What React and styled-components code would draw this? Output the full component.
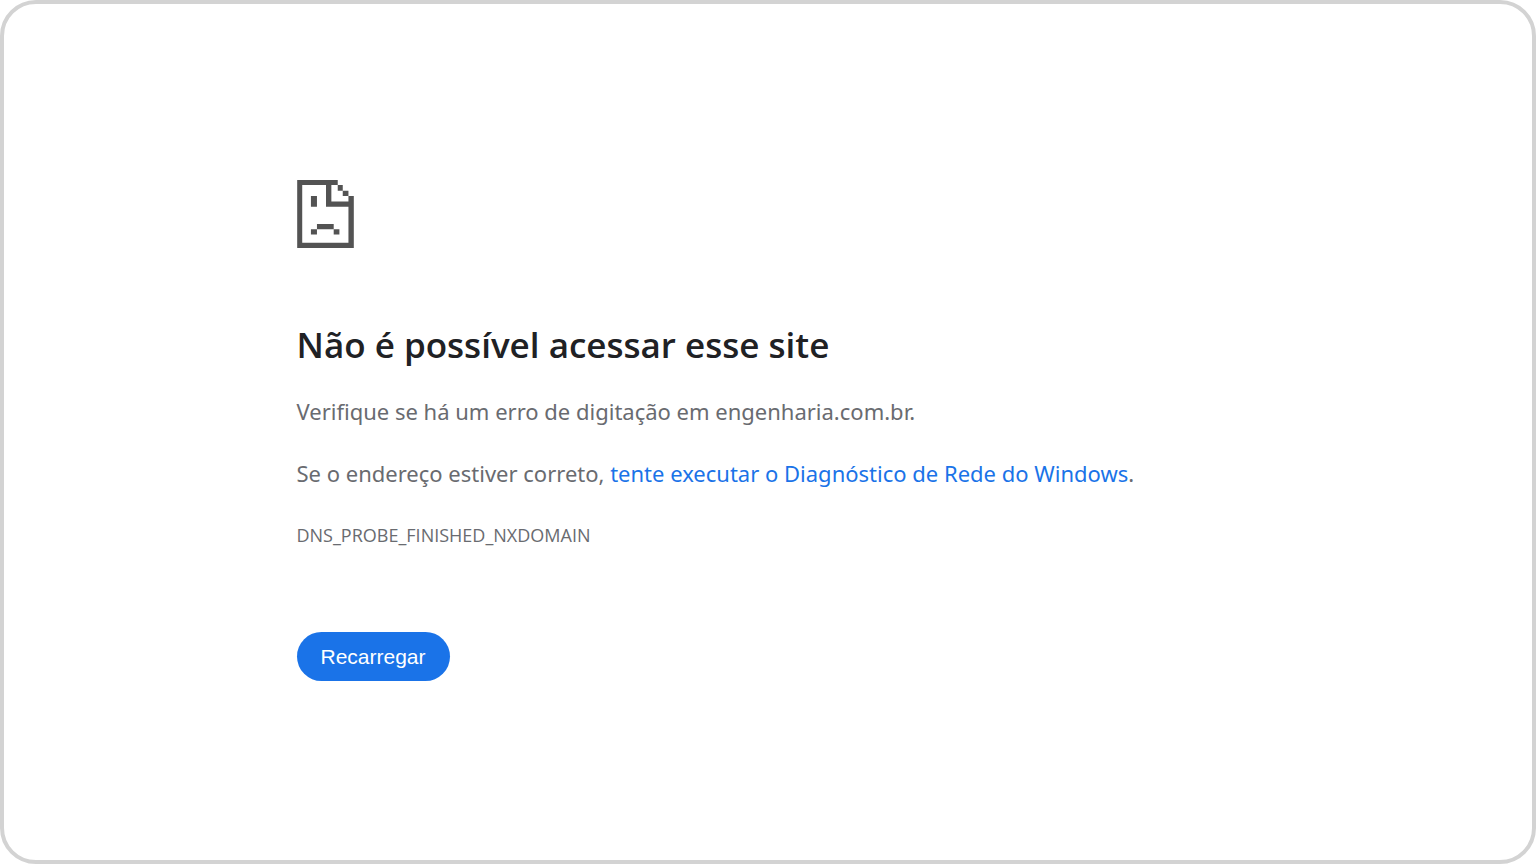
import React from "react";
import styled, { createGlobalStyle } from "styled-components";

const GlobalStyle = createGlobalStyle`
  * {
    box-sizing: border-box;
  }

  body {
    margin: 0;
    background: #ffffff;
    color: #696b70;
    font-family: "Segoe UI", "Noto Sans", "Open Sans", sans-serif;
  }
`;

const Frame = styled.div`
  min-height: 100vh;
  padding: 176px 24px 64px;
  border: 4px solid #d3d3d3;
  border-radius: 36px;
`;

const ErrorPage = styled.main`
  width: 100%;
  max-width: 943px;
  margin: 0 auto;
`;

const SadFile = styled.svg`
  display: block;
  width: 57px;
  height: 68px;
  fill: #535353;
`;

const Title = styled.h1`
  margin: 71px 0 22px;
  color: #202124;
  font-family: "Segoe UI", "Open Sans", sans-serif;
  font-size: 35px;
  font-weight: 600;
  line-height: 52px;
`;

const Message = styled.p`
  margin: 0 0 26px;
  font-size: 22px;
  line-height: 36px;
`;

const HelpLink = styled.a`
  color: #1a73e8;
  text-decoration: none;
`;

const ErrorCode = styled.p`
  margin: 0;
  font-family: "Segoe UI", "Open Sans", sans-serif;
  font-size: 18px;
  line-height: 36px;
`;

const ReloadButton = styled.button`
  height: 49px;
  margin-top: 79px;
  padding: 0 24px;
  border: 0;
  border-radius: 25px;
  background: #1a73e8;
  color: #ffffff;
  font-family: Arial, "Liberation Sans", sans-serif;
  font-size: 21px;
  cursor: pointer;
`;

const SadFileIcon = () => (
  <SadFile viewBox="0 0 169 203" aria-hidden="true">
    <path d="M0 0H121V15H102V64H153V48H169V203H0ZM15 15V187H153V80H86V15Z" fillRule="evenodd" />
    <path d="M121 15h15v17h-15zM136 32h17v16h-17z" />
    <path d="M41 48h18v32h-18zM59 131h50v16h-50zM41 147h18v16h-18zM109 147h17v16h-17z" />
  </SadFile>
);

const App = () => {
  const reload = () => window.location.reload();

  return (
    <>
      <GlobalStyle />
      <Frame>
        <ErrorPage>
          <SadFileIcon />
          <Title>Não é possível acessar esse site</Title>
          <Message>Verifique se há um erro de digitação em engenharia.com.br.</Message>
          <Message>
            Se o endereço estiver correto,{" "}
            <HelpLink href="#">tente executar o Diagnóstico de Rede do Windows</HelpLink>.
          </Message>
          <ErrorCode>DNS_PROBE_FINISHED_NXDOMAIN</ErrorCode>
          <ReloadButton type="button" onClick={reload}>
            Recarregar
          </ReloadButton>
        </ErrorPage>
      </Frame>
    </>
  );
};

export default App;
